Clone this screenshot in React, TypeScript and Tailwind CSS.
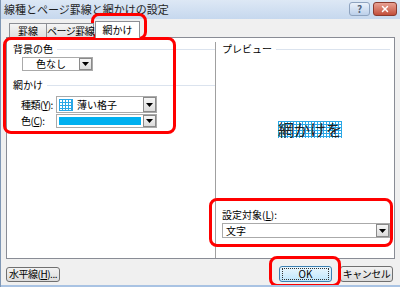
import { X } from 'lucide-react';

const font = { fontFamily: '"Noto Sans CJK JP", "Noto Sans", sans-serif' };

const Arrow = () => (
  <div className="w-[13px] h-full border border-[#8a8a8a] bg-gradient-to-b from-[#f6f6f6] to-[#dcdcdc] flex items-center justify-center shrink-0">
    <svg width="7" height="4" viewBox="0 0 7 4">
      <path d="M0 0h7L3.5 4z" fill="#000" />
    </svg>
  </div>
);

const GridIcon = () => (
  <svg width="14" height="12" viewBox="0 0 14 12">
    <rect x="0.5" y="0.5" width="13" height="11" fill="#fff" stroke="#2aa7e6" />
    <path d="M3.5 0v12M6.5 0v12M9.5 0v12M12.5 0v12M0 3.5h14M0 6.5h14M0 9.5h14" stroke="#2aa7e6" strokeWidth="1" />
  </svg>
);

const GroupLabel = ({ text }: { text: string }) => (
  <div className="flex items-center gap-[4px] text-[10px] leading-none text-black whitespace-nowrap">
    <span>{text}</span>
    <div className="flex-1 h-px bg-[#dbe3ee] mt-[1px]" />
  </div>
);

export default function App() {
  return (
    <div className="w-[400px] h-[287px] bg-[#f0f0f0] relative overflow-hidden border-l border-[#7f97b5] whitespace-nowrap" style={font}>
      {/* title bar */}
      <div className="h-[19px] bg-gradient-to-b from-[#dde8f5] to-[#c6d8ee] flex items-center pl-[3px] pr-[3px]">
        <span className="text-[11px] leading-none text-[#1e1e1e]">線種とページ罫線と網かけの設定</span>
        <div className="ml-auto flex gap-[3px] items-start self-start pt-[2px]">
          <div className="w-[21px] h-[14px] rounded-[3px] border border-[#8ea3bf] bg-gradient-to-b from-[#eaf1fa] to-[#bcd0ea] flex items-center justify-center">
            <span className="text-[10px] leading-none text-[#52627a] font-bold">?</span>
          </div>
          <div className="w-[24px] h-[14px] rounded-[3px] border border-[#8a3a2e] bg-gradient-to-b from-[#e8a194] to-[#c24e3a] flex items-center justify-center">
            <X size={10} strokeWidth={3.5} color="#fff" />
          </div>
        </div>
      </div>

      <div className="px-[5px] pt-[2px]">
        {/* tabs */}
        <div className="flex items-end h-[16px] pl-[3px] relative z-10">
          <div className="w-[38px] h-[14px] text-center border border-b-0 border-[#8c8e94] bg-gradient-to-b from-[#f5f5f5] to-[#e0e0e0] text-[10px] leading-[13px]">罫線</div>
          <div className="w-[47px] h-[14px] text-center border border-b-0 border-l-0 border-[#8c8e94] bg-gradient-to-b from-[#f5f5f5] to-[#e0e0e0] text-[10px] leading-[13px] tracking-[-0.5px]">ページ罫線</div>
          <div className="w-[45px] h-[17px] ml-[1px] text-center border border-b-0 border-[#8c8e94] bg-white text-[10px] leading-[16px] -mb-px">網かけ</div>
        </div>

        {/* panel */}
        <div className="h-[222px] bg-white border border-[#898c95] flex">
          <div className="w-[208px] pl-[6px] pt-[6px]">
            <GroupLabel text="背景の色" />
            <div className="ml-[9px] mt-[3px] w-[71px] h-[14px] flex border border-[#aaa]">
              <div className="flex-1 text-center text-[10px] leading-[12px]">色なし</div>
              <Arrow />
            </div>
            <div className="mt-[9px]">
              <GroupLabel text="網かけ" />
            </div>
            <div className="ml-[8px] mt-[6px] flex items-center">
              <span className="w-[35px] text-[10px] leading-none tracking-[-0.5px]">種類(<span className="underline">Y</span>):</span>
              <div className="w-[101px] h-[17px] flex border border-[#aaa] items-center">
                <div className="flex-1 flex items-center gap-[4px] pl-[2px]">
                  <GridIcon />
                  <span className="text-[10px] leading-none">薄い格子</span>
                </div>
                <Arrow />
              </div>
            </div>
            <div className="ml-[8px] mt-[1px] flex items-center">
              <span className="w-[35px] text-[10px] leading-none tracking-[-0.5px]">色(<span className="underline">C</span>):</span>
              <div className="w-[101px] h-[14px] flex border border-[#aaa] items-center">
                <div className="flex-1 h-full p-[2px]">
                  <div className="h-full bg-[#00b0f0]" />
                </div>
                <Arrow />
              </div>
            </div>
          </div>

          <div className="flex-1 border-l border-[#a0a0a0] mt-[4px] pl-[6px] pr-[4px] pt-[2px] flex flex-col">
            <GroupLabel text="プレビュー" />
            <div className="flex justify-center mt-[67px] pl-[8px]">
              <span
                className="text-[16px] leading-[17px] text-[#222]"
                style={{
                  backgroundColor: '#fff',
                  backgroundImage:
                    'linear-gradient(#2aa7e6 1px, transparent 1px), linear-gradient(90deg, #2aa7e6 1px, transparent 1px)',
                  backgroundSize: '3px 3px',
                }}
              >
                網かけを
              </span>
            </div>
            <div className="mt-auto mb-[20px]">
              <div className="text-[10px] leading-none">設定対象(<span className="underline">L</span>):</div>
              <div className="mt-[3px] h-[15px] flex border border-[#aaa] items-center">
                <div className="flex-1 pl-[3px] text-[10px] leading-none">文字</div>
                <Arrow />
              </div>
            </div>
          </div>
        </div>

        {/* buttons */}
        <div className="flex mt-[7px] items-center">
          <button className="h-[15px] w-[54px] rounded-[3px] border border-[#707070] bg-gradient-to-b from-[#f2f2f2] to-[#dcdcdc] text-[10px] leading-none tracking-[-0.5px]">
            水平線(<span className="underline">H</span>)...
          </button>
          <button className="ml-auto h-[16px] w-[53px] rounded-[3px] border border-[#3c7fb1] bg-gradient-to-b from-[#eaf6fd] to-[#bee6fd] text-[10px] leading-none flex items-center justify-center">
            <span className="block w-[47px] h-[12px] leading-[10px] border border-dotted border-[#333]">OK</span>
          </button>
          <button className="ml-[8px] mr-[2px] h-[16px] w-[53px] rounded-[3px] border border-[#707070] bg-gradient-to-b from-[#f2f2f2] to-[#dcdcdc] text-[10px] leading-none tracking-[-0.5px]">
            キャンセル
          </button>
        </div>
      </div>

      {/* red highlight marks */}
      <div className="absolute left-[90px] top-[13px] w-[56px] h-[27px] border-[3px] border-[#ff0000] rounded-[8px]" />
      <div className="absolute left-[2px] top-[37px] w-[173px] h-[97px] border-[3px] border-[#ff0000] rounded-[8px]" />
      <div className="absolute left-[208px] top-[198px] w-[184px] h-[49px] border-[3px] border-[#ff0000] rounded-[8px]" />
      <div className="absolute left-[268px] top-[256px] w-[72px] h-[31px] border-[3px] border-[#ff0000] rounded-[8px]" />
      <div className="absolute left-0 right-0 bottom-0 h-[2px] bg-[#a9c3e3]" />
    </div>
  );
}
